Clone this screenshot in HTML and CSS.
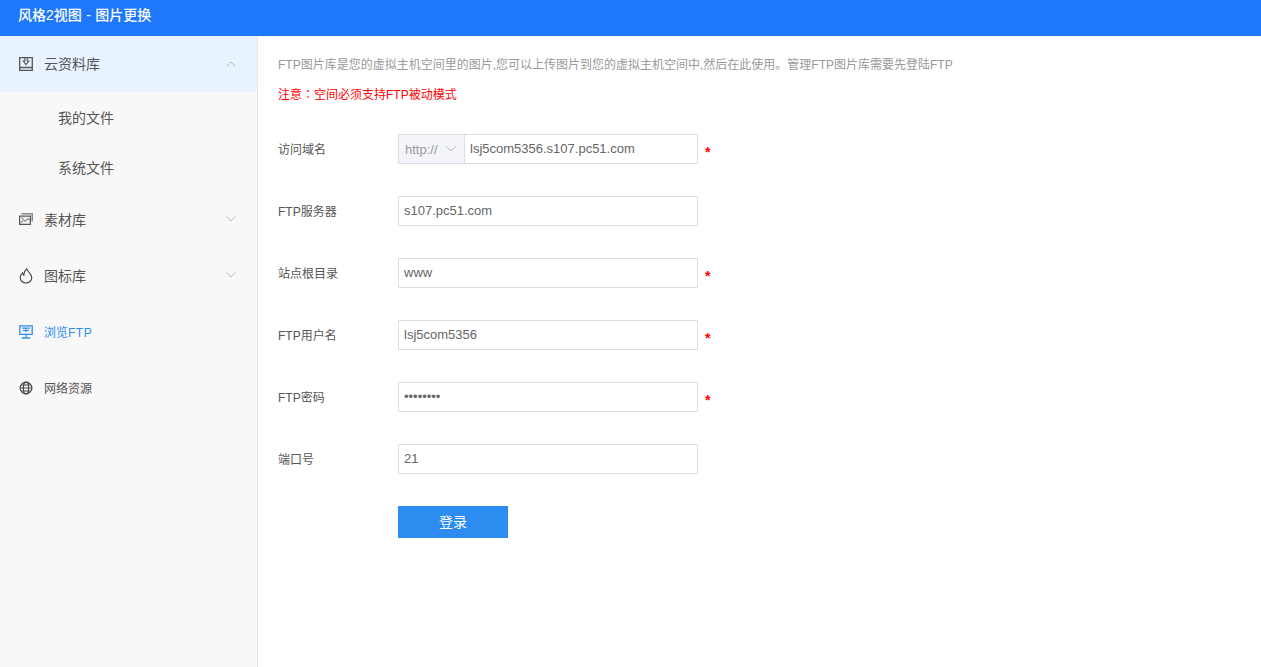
FILE: index.html
```html
<!DOCTYPE html>
<html lang="zh-CN">
<head>
<meta charset="utf-8">
<title>风格2视图 - 图片更换</title>
<link rel="stylesheet" href="styles.css">
</head>
<body>
<header class="topbar">风格2视图 - 图片更换</header>
<div class="layout">
  <aside class="sidebar">
    <div class="menu-item is-open">
      <svg class="menu-icon" viewBox="0 0 14 14"><path d="M.7.7h12.600v12.600H.7zM.7 10.500h12.600" fill="none" stroke="#555" stroke-width="1.300"/><path d="M5.800 1v3H4.200L7 7.600 9.800 4H8.200V1" fill="none" stroke="#555" stroke-width="1.100"/></svg>
      <span class="menu-label">云资料库</span>
      <svg class="chevron chevron-up" viewBox="0 0 10 6"><path d="M.5 5.500 5 1l4.500 4.500" fill="none" stroke="#bbb"/></svg>
    </div>
    <div class="submenu-item">我的文件</div>
    <div class="submenu-item">系统文件</div>
    <div class="menu-item">
      <svg class="menu-icon" viewBox="0 0 14 14"><path d="M2.500.8H13.300V8.500" fill="none" stroke="#888" stroke-width="1.600"/><path d="M.6 3.200h10.800v8.200H.6z" fill="none" stroke="#555" stroke-width="1.200"/><path d="M1.500 9.800 4.500 7l1.500 1.300L9 5.500l1.800 1.600" fill="none" stroke="#555"/><circle cx="3.500" cy="5.200" r=".8" fill="#555"/></svg>
      <span class="menu-label">素材库</span>
      <svg class="chevron" viewBox="0 0 10 6"><path d="M.5.5 5 5 9.500.5" fill="none" stroke="#bbb"/></svg>
    </div>
    <div class="menu-item">
      <svg class="menu-icon menu-icon-low" viewBox="0 0 14 16"><path d="M7.800.8c.3 2.700 5 4.600 5 9 0 2.900-2.600 5.200-5.800 5.200s-5.800-2.300-5.800-5.200c0-2.300 1-3.900 2.300-5 .1 1.100.5 1.900 1.300 2.400C4.800 4.900 6 2.400 7.800.8z" fill="none" stroke="#444" stroke-width="1.100"/></svg>
      <span class="menu-label">图标库</span>
      <svg class="chevron" viewBox="0 0 10 6"><path d="M.5.5 5 5 9.500.5" fill="none" stroke="#bbb"/></svg>
    </div>
    <div class="menu-item menu-item-small is-current">
      <svg class="menu-icon" viewBox="0 0 14 14"><path d="M.8.8h12.400v8.600H.8zM7 9.400v2.600M2.800 13h8.400" fill="none" stroke="#2d8cf0" stroke-width="1.300"/><path d="M3 3.200h8M7 3.200v4M4 5.500h6" fill="none" stroke="#2d8cf0" stroke-width="1.200"/></svg>
      <span class="menu-label">浏览<span class="ftp-word">FTP</span></span>
    </div>
    <div class="menu-item menu-item-small">
      <svg class="menu-icon" viewBox="0 0 14 14"><g fill="none" stroke="#444" stroke-width="1.100"><circle cx="7" cy="7" r="5.900"/><ellipse cx="7" cy="7" rx="2.600" ry="5.900"/><path d="M1.100 7h11.800M2 4h10M2 10h10"/></g></svg>
      <span class="menu-label">网络资源</span>
    </div>
  </aside>
  <main class="content">
    <p class="hint">FTP图片库是您的虚拟主机空间里的图片,您可以上传图片到您的虚拟主机空间中,然后在此使用。管理FTP图片库需要先登陆FTP</p>
    <p class="warning">注意<span class="warning-colon" lang="zh-TW">：</span>空间必须支持FTP被动模式</p>
    <form class="ftp-form">
      <div class="form-row">
        <label class="form-label">访问域名</label>
        <div class="field">
          <div class="protocol"><span>http://</span><svg class="protocol-arrow" viewBox="0 0 10 6"><path d="M.5.5 5 5 9.500.5" fill="none" stroke="#bbb"/></svg></div>
          <input class="field-input" type="text" value="lsj5com5356.s107.pc51.com">
        </div>
        <span class="required">*</span>
      </div>
      <div class="form-row">
        <label class="form-label">FTP服务器</label>
        <div class="field"><input class="field-input" type="text" value="s107.pc51.com"></div>
      </div>
      <div class="form-row">
        <label class="form-label">站点根目录</label>
        <div class="field"><input class="field-input" type="text" value="www"></div>
        <span class="required">*</span>
      </div>
      <div class="form-row">
        <label class="form-label">FTP用户名</label>
        <div class="field"><input class="field-input" type="text" value="lsj5com5356"></div>
        <span class="required">*</span>
      </div>
      <div class="form-row">
        <label class="form-label">FTP密码</label>
        <div class="field"><input class="field-input" type="password" value="12345678"></div>
        <span class="required">*</span>
      </div>
      <div class="form-row">
        <label class="form-label">端口号</label>
        <div class="field"><input class="field-input" type="text" value="21"></div>
      </div>
      <button class="submit" type="button">登录</button>
    </form>
  </main>
</div>
</body>
</html>
```
FILE: styles.css
```css
* { box-sizing: border-box; }
html, body { height: 100%; }
body {
  margin: 0;
  display: flex;
  flex-direction: column;
  height: 667px;
  overflow: hidden;
  background: #fff;
  font-family: "Liberation Sans", "Noto Sans CJK SC", sans-serif;
  font-size: 12px;
  color: #555;
}
.topbar {
  height: 36px;
  flex: none;
  padding: 0 18px;
  line-height: 30px;
  background: #1e78fa;
  color: #fff;
  font-size: 14px;
  font-weight: 500;
  word-spacing: .5px;
}
.layout { flex: 1; display: flex; min-height: 0; }
.sidebar {
  width: 258px;
  flex: none;
  background: #f8f8f8;
  border-right: 1px solid #e6e6e6;
}
.menu-item {
  height: 56px;
  display: flex;
  align-items: center;
  padding: 0 21px 0 19px;
  font-size: 14px;
  color: #555;
}
.menu-item-small { font-size: 12px; }
.menu-item.is-open { background: #e8f3ff; }
.menu-item.is-current { color: #2d8cf0; }
.menu-icon { width: 14px; height: 14px; flex: none; margin-right: 11px; }
.menu-icon-low { height: 16px; }
.menu-label { flex: 1; margin-top: -3px; }
.menu-item-small .menu-label { margin-top: -1px; }
.ftp-word { letter-spacing: .5px; }
.chevron { width: 10px; height: 6px; flex: none; margin-top: -3px; }
.chevron-up { margin-top: -1px; }
.submenu-item {
  height: 50px;
  line-height: 52px;
  padding-left: 58px;
  font-size: 14px;
  color: #555;
}
.content { flex: 1; padding: 21px 20px 0; min-width: 0; }
.hint { margin: 0; height: 16px; line-height: 16px; color: #999; }
.warning { margin: 13px 0 0; height: 16px; line-height: 16px; color: #f00; }
.warning-colon { font-family: "Noto Sans CJK TC", sans-serif; }
.ftp-form { margin-top: 32px; }
.form-row {
  display: flex;
  align-items: center;
  height: 30px;
  margin-bottom: 32px;
}
.form-label { width: 120px; flex: none; padding-bottom: 2px; }
.field {
  width: 300px;
  height: 30px;
  display: flex;
  border: 1px solid #dcdee6;
  background: #fff;
}
.protocol {
  width: 66px;
  flex: none;
  display: flex;
  align-items: center;
  justify-content: space-between;
  padding: 0 8px 0 6px;
  background: #f4f5fa;
  border-right: 1px solid #dcdee6;
  color: #999;
  font-size: 13px;
}
.protocol-arrow { width: 10px; height: 6px; }
.field-input {
  flex: 1;
  min-width: 0;
  height: 28px;
  padding: 0 5px 1px;
  border: 0;
  outline: 0;
  background: transparent;
  font: 13px "Liberation Sans", sans-serif;
  color: #666;
}
.required {
  margin-left: 7px;
  margin-top: 6px;
  color: #f00;
  font-size: 14px;
  font-weight: bold;
}
.submit {
  display: block;
  width: 110px;
  height: 32px;
  margin: 0 0 0 120px;
  padding: 0 0 2px;
  border: 0;
  background: #2d8cf0;
  color: #fff;
  font: 14px "Liberation Sans", "Noto Sans CJK SC", sans-serif;
}
```
